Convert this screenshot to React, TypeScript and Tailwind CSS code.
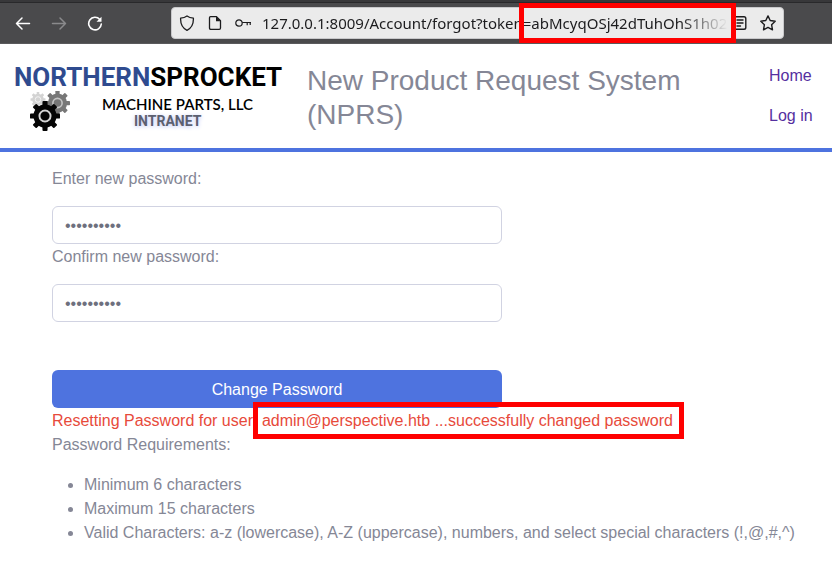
import React from "react";

const requirements = [
  "Minimum 6 characters",
  "Maximum 15 characters",
  "Valid Characters: a-z (lowercase), A-Z (uppercase), numbers, and select special characters (!,@,#,^)",
];

type GearProps = { cx: number; cy: number; r: number; color: string; ring: string };

function Gear({ cx, cy, r, color, ring }: GearProps) {
  return (
    <g transform={`translate(${cx} ${cy})`}>
      {[0, 45, 90, 135].map((angle) => (
        <rect
          key={angle}
          x={-r * 0.17}
          y={-r}
          width={r * 0.34}
          height={r * 2}
          rx={r * 0.06}
          fill={color}
          transform={`rotate(${angle})`}
        />
      ))}
      <circle r={r * 0.77} fill={color} />
      <circle r={r * 0.37} fill="none" stroke={ring} strokeWidth={r * 0.13} />
    </g>
  );
}

function Logo() {
  return (
    <div className="w-[266px] shrink-0">
      <div className="flex h-[26px] items-center whitespace-nowrap font-[Roboto,sans-serif] text-[26px] font-bold">
        <span className="text-[#2f4b8f]">NORTHERN</span>
        <span className="text-black">SPROCKET</span>
      </div>
      <div className="flex pl-4">
        <svg className="mt-px h-10 w-10 shrink-0" viewBox="0 0 40 40" aria-hidden="true">
          <Gear cx={8} cy={8.5} r={7.5} color="#d3d3d3" ring="#f3f3f3" />
          <Gear cx={27.5} cy={12} r={12.5} color="#777777" ring="#c4c4c4" />
          <Gear cx={15} cy={25} r={15} color="#050505" ring="#d5d5d5" />
        </svg>
        <div className="ml-8 flex flex-col pt-1">
          <span className="whitespace-nowrap font-[Lato,sans-serif] text-[15px] leading-5 font-semibold text-black">
            MACHINE PARTS, LLC
          </span>
          <span className="pl-8 font-[Roboto,sans-serif] text-sm leading-[14px] font-bold text-[#5c6070] [text-shadow:0_1px_4px_#b9c2f5]">
            INTRANET
          </span>
        </div>
      </div>
    </div>
  );
}

function BrowserBar() {
  return (
    <div className="relative border-t-2 border-[#38383a] bg-[#4a4a4c]">
      <div className="flex h-[42px] items-center border-t border-b border-t-[#29292b] border-b-[#5a5a5c]">
        <div className="flex w-[171px] shrink-0 items-center gap-5 pl-[15px] text-white">
          <button type="button" aria-label="Back" className="h-4 w-4">
            <svg viewBox="0 0 16 16" className="h-4 w-4" fill="none" stroke="currentColor" strokeWidth="1.5" strokeLinecap="round" strokeLinejoin="round">
              <path d="M14.5 8.5H1.5M7 3L1.5 8.5L7 14" />
            </svg>
          </button>
          <button type="button" aria-label="Forward" className="h-4 w-4 text-[#8a8a8c]">
            <svg viewBox="0 0 16 16" className="h-4 w-4" fill="none" stroke="currentColor" strokeWidth="1.5" strokeLinecap="round" strokeLinejoin="round">
              <path d="M1.5 8.5H14.5M9 3L14.5 8.5L9 14" />
            </svg>
          </button>
          <button type="button" aria-label="Reload" className="h-4 w-4">
            <svg viewBox="0 0 16 16" className="h-4 w-4" fill="none" stroke="currentColor" strokeWidth="1.6" strokeLinecap="round">
              <path d="M12.8 4.5A6.3 6.3 0 1 0 14.3 9" />
              <path d="M14.5 1.7V6.7H9.5Z" fill="currentColor" stroke="none" />
            </svg>
          </button>
        </div>
        <div className="mr-12 flex h-8 min-w-0 flex-1 items-center rounded border border-[#c9c9cb] bg-[#ebebeb] pl-[7px] text-[#1c1c1e]">
          <svg viewBox="0 0 16 16" className="h-4 w-4 shrink-0" fill="none" stroke="currentColor" strokeWidth="1.3" strokeLinejoin="round">
            <path d="M8 .9Q10.5 2.8 14.4 3.2C14.6 8.5 12.8 13 8 15.3C3.2 13 1.4 8.5 1.6 3.2Q5.5 2.8 8 .9Z" />
          </svg>
          <svg viewBox="0 0 16 16" className="ml-3 h-4 w-4 shrink-0" fill="none" stroke="currentColor" strokeWidth="1.3" strokeLinejoin="round">
            <path d="M3.5 1.7H9.5L13.5 5.7V13Q13.5 14.3 12.2 14.3H3.8Q2.5 14.3 2.5 13V2.7Q2.5 1.7 3.5 1.7Z" />
            <path d="M9 1.5V6.2H13.7Z" fill="currentColor" stroke="none" />
          </svg>
          <svg viewBox="0 0 16 16" className="ml-3 h-4 w-4 shrink-0" fill="none" stroke="currentColor" strokeWidth="1.2">
            <circle cx="4" cy="8" r="3.2" />
            <path d="M7.2 7.5H16M12.2 7.5V10.3M15.2 7.5V10" />
          </svg>
          <input
            aria-label="Address"
            type="text"
            readOnly
            className="ml-[11px] min-w-0 flex-1 bg-transparent font-['Noto_Sans',sans-serif] text-[15px] leading-6 text-[#1c1c1e] outline-none [mask-image:linear-gradient(to_left,transparent,black_48px)]"
            value="127.0.0.1:8009/Account/forgot?token=abMcyqOSj42dTuhOhS1h02"
          />
          <button type="button" aria-label="Reader view" className="ml-1 h-4 w-4 shrink-0">
            <svg viewBox="0 0 16 16" className="h-4 w-4" fill="none" stroke="currentColor" strokeWidth="1.4" strokeLinecap="round">
              <rect x="2.2" y="1.7" width="11.6" height="12.6" rx="1.8" />
              <path d="M5 5H11M5 8H11M5 11H8.5" />
            </svg>
          </button>
          <button type="button" aria-label="Bookmark" className="mr-[7px] ml-3 h-4 w-4 shrink-0">
            <svg viewBox="0 0 16 16" className="h-4 w-4" fill="none" stroke="currentColor" strokeWidth="1.4" strokeLinejoin="round">
              <path d="M8 .9L10.2 5.5L15.2 6.2L11.6 9.7L12.5 14.8L8 12.4L3.5 14.8L4.4 9.7L.8 6.2L5.8 5.5Z" />
            </svg>
          </button>
        </div>
      </div>
      <div className="pointer-events-none absolute top-px right-24 h-10 w-[217px] border-5 border-[#ff0000]" />
    </div>
  );
}

function PasswordField({ id, label }: { id: string; label: string }) {
  return (
    <div className="flex flex-col">
      <label htmlFor={id} className="mb-[15px] pt-px">
        {label}
      </label>
      <input
        id={id}
        type="password"
        defaultValue="password12"
        className="h-[38px] rounded-md border border-[#d1d3e2] bg-white px-3 pt-0.5 text-[#6e707e] outline-none"
      />
    </div>
  );
}

export default function App() {
  return (
    <div className="min-h-screen bg-white font-['Liberation_Sans',Arial,sans-serif] text-base leading-6 text-[#858796]">
      <BrowserBar />
      <header className="flex items-start border-b-4 border-[#4e73df] pt-5 pr-[19px] pb-4 pl-[14px]">
        <Logo />
        <h1 className="ml-[27px] min-w-0 flex-1 text-[28px] leading-[34px]">New Product Request System (NPRS)</h1>
        <nav className="flex w-11 flex-col gap-4 whitespace-nowrap text-[#5530a0]">
          <a href="#home">Home</a>
          <a href="#login">Log in</a>
        </nav>
      </header>
      <main className="pt-[14px] pr-6 pl-[52px]">
        <form className="flex w-full max-w-[450px] flex-col" onSubmit={(e) => e.preventDefault()}>
          <PasswordField id="new-password" label="Enter new password:" />
          <PasswordField id="confirm-password" label="Confirm new password:" />
          <button type="submit" className="mt-12 h-[38px] rounded-md bg-[#4e73df] pt-0.5 text-white">
            Change Password
          </button>
        </form>
        <p className="pt-px text-[#e74a3b]">
          Resetting Password for user:{" "}
          <span className="relative">
            admin@perspective.htb ...successfully changed password
            <span className="pointer-events-none absolute -top-2.5 -right-[11px] -left-[9px] h-[37px] border-5 border-[#ff0000]" />
          </span>
        </p>
        <p>Password Requirements:</p>
        <ul className="mt-4 list-disc pl-8">
          {requirements.map((item) => (
            <li key={item}>{item}</li>
          ))}
        </ul>
      </main>
    </div>
  );
}
